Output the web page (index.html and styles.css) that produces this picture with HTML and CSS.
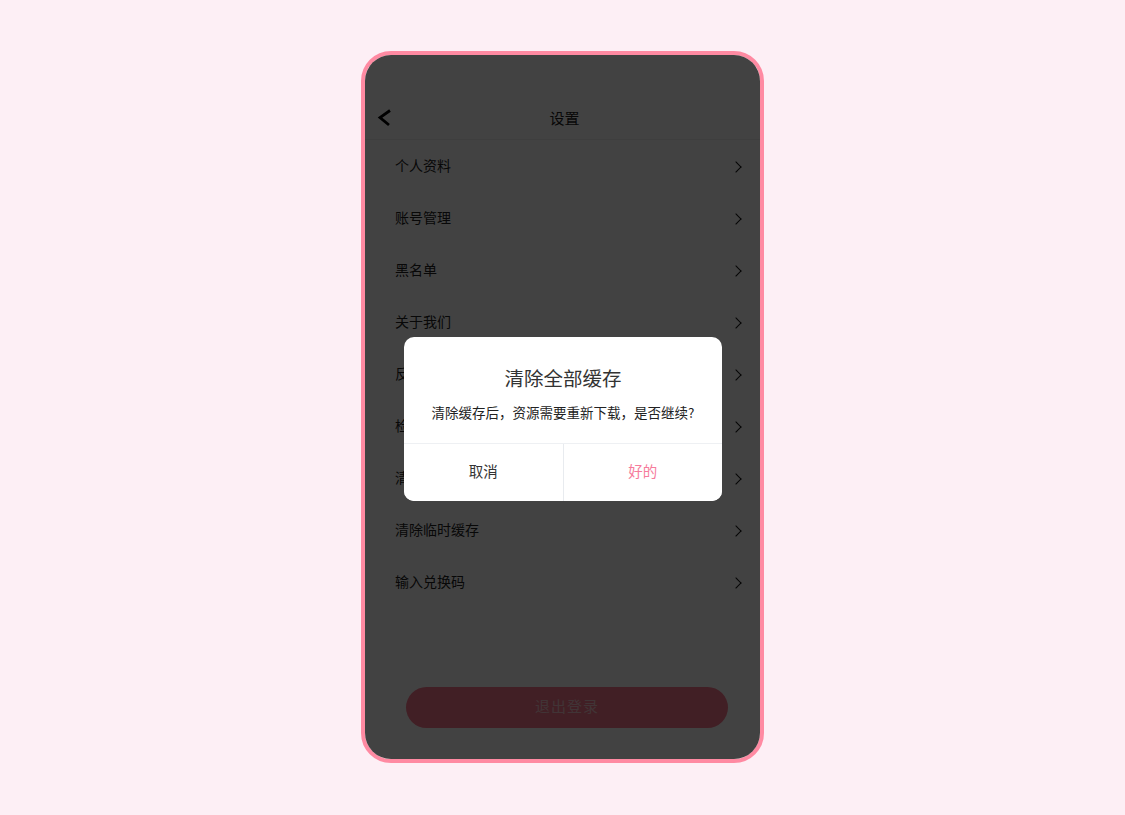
FILE: index.html
```html
<!DOCTYPE html>
<html lang="zh-CN">
<head>
<meta charset="utf-8">
<title>设置</title>
<link rel="stylesheet" href="styles.css">
</head>
<body>
<div class="phone">
  <div class="screen">
    <div class="status"></div>
    <div class="header">
      <span class="back">
        <svg width="16" height="18" viewBox="0 0 16 18"><path d="M13 1.5 L3 8.5 L12 16" fill="none" stroke="#000" stroke-width="2.8" stroke-linecap="butt" stroke-linejoin="miter"/></svg>
      </span>
      <span class="title">设置</span>
    </div>
    <ul class="list">
      <li class="row"><span>个人资料</span><i class="chev"></i></li>
      <li class="row"><span>账号管理</span><i class="chev"></i></li>
      <li class="row"><span>黑名单</span><i class="chev"></i></li>
      <li class="row"><span>关于我们</span><i class="chev"></i></li>
      <li class="row"><span>反馈与建议</span><i class="chev"></i></li>
      <li class="row"><span>检查更新</span><i class="chev"></i></li>
      <li class="row"><span>清除全部缓存</span><i class="chev"></i></li>
      <li class="row"><span>清除临时缓存</span><i class="chev"></i></li>
      <li class="row"><span>输入兑换码</span><i class="chev"></i></li>
    </ul>
    <button class="logout">退出登录</button>
  </div>
  <div class="mask"></div>
  <div class="dialog">
    <div class="dialog-body">
      <div class="dialog-title">清除全部缓存</div>
      <div class="dialog-msg">清除缓存后，资源需要重新下载，是否继续?</div>
    </div>
    <div class="dialog-actions">
      <button class="act cancel">取消</button>
      <button class="act ok">好的</button>
    </div>
  </div>
</div>
</body>
</html>
```

FILE: styles.css
```css
* { box-sizing: border-box; }
html, body { margin: 0; padding: 0; }
body {
  background: #fdeff5;
  font-family: "Noto Sans CJK SC", "Noto Sans", sans-serif;
  padding-top: 51px;
  height: 815px;
  overflow: hidden;
}
.phone {
  position: relative;
  width: 403px;
  height: 712px;
  margin: 0 auto;
  border: 4px solid #ff8aa2;
  border-radius: 30px;
  overflow: hidden;
  background: #fff;
}
.screen {
  display: flex;
  flex-direction: column;
  height: 100%;
}
.status { height: 42px; flex: none; }
.header {
  height: 43px;
  flex: none;
  display: flex;
  align-items: center;
  justify-content: center;
  position: relative;
  border-bottom: 1px solid #f0f0f0;
  padding-bottom: 2px;
}
.back {
  position: absolute;
  left: 12px;
  top: 12px;
  display: flex;
}
.title {
  font-size: 15px;
  color: #222;
  margin-left: 4px;
}
.list {
  list-style: none;
  margin: 0;
  padding: 0;
}
.row {
  height: 52px;
  display: flex;
  align-items: center;
  justify-content: space-between;
  padding: 0 20px 2px 30px;
  font-size: 14px;
  color: #222;
}
.chev {
  width: 8px;
  height: 8px;
  border-top: 1.3px solid #111;
  border-right: 1.3px solid #111;
  transform: rotate(45deg);
  margin-top: 4px;
}
.logout {
  margin: 79px 32px 0 41px;
  height: 41px;
  padding: 0 0 4px;
  border: none;
  border-radius: 21px;
  background: #fa778e;
  color: rgba(255,255,255,0.62);
  font-family: inherit;
  font-size: 15px;
  letter-spacing: 1px;
}
.mask {
  position: absolute;
  inset: 0;
  background: rgba(0,0,0,0.74);
}
.dialog {
  position: absolute;
  left: 39px;
  top: 282px;
  width: 318px;
  background: #fff;
  border-radius: 10px;
  overflow: hidden;
}
.dialog-body {
  padding: 28px 6px 22px;
  text-align: center;
}
.dialog-title {
  font-size: 19.5px;
  line-height: 26px;
  color: #333;
}
.dialog-msg {
  margin-top: 12px;
  font-size: 13.5px;
  line-height: 18px;
  color: #222;
}
.dialog-actions {
  display: flex;
  border-top: 1px solid #eef0f3;
  height: 58px;
}
.act {
  flex: 1;
  border: none;
  background: #fff;
  font-family: inherit;
  font-size: 14.5px;
  padding: 0 0 4px;
}
.cancel { color: #333; border-right: 1px solid #e8ebef; }
.ok { color: #f67c9c; }
```
